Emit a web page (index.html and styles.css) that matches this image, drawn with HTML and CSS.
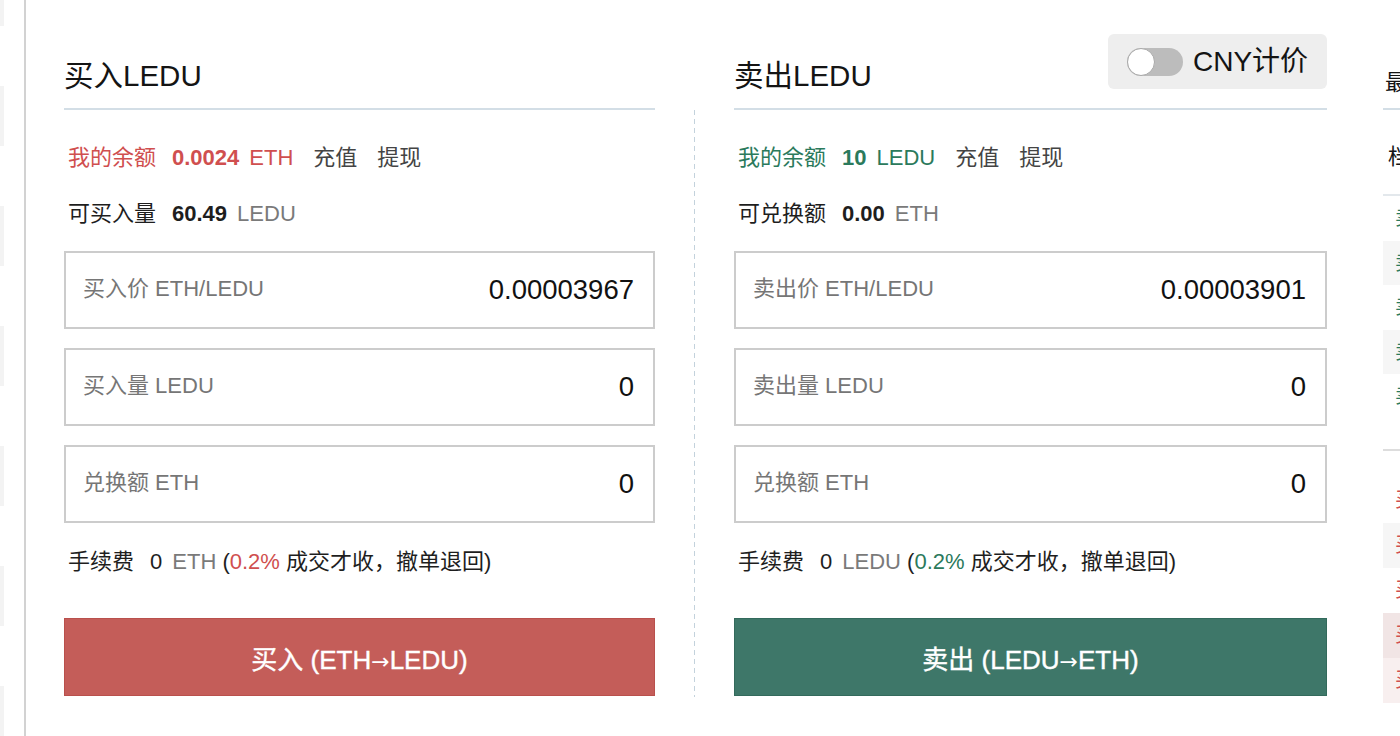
FILE: index.html
```html
<!DOCTYPE html>
<html lang="zh-CN">
<head>
<meta charset="utf-8">
<title>LEDU 交易</title>
<link rel="stylesheet" href="styles.css">
</head>
<body>
<div class="page">
  <aside class="rail">
    <span class="rail-block"></span>
    <span class="rail-block"></span>
    <span class="rail-block"></span>
    <span class="rail-block"></span>
    <span class="rail-block"></span>
    <span class="rail-block"></span>
    <span class="rail-block"></span>
  </aside>
  <main class="main">
    <section class="panel buy">
      <header class="panel-head">
        <h2 class="title">买入LEDU</h2>
      </header>
      <div class="info info-first">
        <span class="lbl red">我的余额</span><b class="num red">0.0024</b><span class="unit red">ETH</span><a class="link">充值</a><a class="link">提现</a>
      </div>
      <div class="info info-second">
        <span class="lbl">可买入量</span><b class="num">60.49</b><span class="unit gray">LEDU</span>
      </div>
      <div class="field"><span class="field-label">买入价 ETH/LEDU</span><span class="field-value">0.00003967</span></div>
      <div class="field"><span class="field-label">买入量 LEDU</span><span class="field-value">0</span></div>
      <div class="field"><span class="field-label">兑换额 ETH</span><span class="field-value">0</span></div>
      <div class="fee"><span class="fee-lbl">手续费</span><span class="fee-num">0</span><span class="gray">ETH</span>&nbsp;(<span class="red">0.2%</span> 成交才收，撤单退回)</div>
      <button class="btn btn-buy">买入 (ETH<span class="arrow">→</span>LEDU)</button>
    </section>

    <div class="vsep"><span class="vsep-line"></span></div>

    <section class="panel sell">
      <header class="panel-head">
        <h2 class="title">卖出LEDU</h2>
        <div class="toggle-box">
          <span class="switch"><span class="knob"></span></span>
          <span class="toggle-text">CNY计价</span>
        </div>
      </header>
      <div class="info info-first">
        <span class="lbl green">我的余额</span><b class="num green">10</b><span class="unit green">LEDU</span><a class="link">充值</a><a class="link">提现</a>
      </div>
      <div class="info info-second">
        <span class="lbl">可兑换额</span><b class="num">0.00</b><span class="unit gray">ETH</span>
      </div>
      <div class="field"><span class="field-label">卖出价 ETH/LEDU</span><span class="field-value">0.00003901</span></div>
      <div class="field"><span class="field-label">卖出量 LEDU</span><span class="field-value">0</span></div>
      <div class="field"><span class="field-label">兑换额 ETH</span><span class="field-value">0</span></div>
      <div class="fee"><span class="fee-lbl">手续费</span><span class="fee-num">0</span><span class="gray">LEDU</span>&nbsp;(<span class="green">0.2%</span> 成交才收，撤单退回)</div>
      <button class="btn btn-sell">卖出 (LEDU<span class="arrow">→</span>ETH)</button>
    </section>

    <section class="book">
      <div class="book-head">最新价格</div>
      <div class="book-sub">档位</div>
      <div class="asks">
        <div class="row ask">卖5 0.00004120</div>
        <div class="row ask">卖4 0.00004080</div>
        <div class="row ask">卖3 0.00004010</div>
        <div class="row ask">卖2 0.00003950</div>
        <div class="row ask">卖1 0.00003901</div>
      </div>
      <div class="mid-gap"></div>
      <div class="bids">
        <div class="row bid">买1 0.00003967</div>
        <div class="row bid">买2 0.00003900</div>
        <div class="row bid">买3 0.00003850</div>
        <div class="row bid">买4 0.00003800</div>
        <div class="row bid">买5 0.00003760</div>
      </div>
    </section>
  </main>
</div>
</body>
</html>
```

FILE: styles.css
```css
html, body {
  margin: 0;
  padding: 0;
  background: #fff;
}

body {
  font-family: "Liberation Sans", "Noto Sans CJK SC", sans-serif;
  color: #1e1e1e;
  overflow: hidden;
}

.page {
  display: flex;
  width: 1400px;
  height: 736px;
  overflow: hidden;
}

/* left rail */
.rail {
  width: 24px;
  flex: none;
  display: flex;
  flex-direction: column;
  gap: 60px;
  margin-top: -34px;
}

.rail-block {
  display: block;
  width: 4px;
  height: 60px;
  flex: none;
  background: #f3f3f3;
}

.main {
  flex: none;
  display: flex;
  align-items: flex-start;
  border-left: 2px solid #d2d2d2;
  padding-left: 38px;
  height: 736px;
  box-sizing: border-box;
}

/* panels */
.panel {
  flex: none;
  display: flex;
  flex-direction: column;
}

.buy { width: 591px; }
.sell { width: 593px; }

.panel-head {
  height: 110px;
  box-sizing: border-box;
  border-bottom: 2px solid #d3dee6;
  display: flex;
  justify-content: space-between;
  align-items: flex-start;
}

.title {
  margin: 56px 0 0;
  font-size: 29.5px;
  font-weight: normal;
  line-height: 40px;
  color: #141414;
}

.toggle-box {
  margin-top: 34px;
  width: 219px;
  height: 55px;
  box-sizing: border-box;
  background: #eeeeee;
  border-radius: 6px;
  display: flex;
  align-items: center;
  padding-left: 19px;
  gap: 10px;
}

.switch {
  display: flex;
  width: 56px;
  height: 28px;
  border-radius: 14px;
  background: #bcbcbc;
  flex: none;
}

.knob {
  display: block;
  width: 28px;
  height: 28px;
  box-sizing: border-box;
  border-radius: 50%;
  background: #fff;
  border: 1px solid #a9a9a9;
}

.toggle-text {
  font-size: 28px;
  line-height: 32px;
  color: #141414;
}

/* info rows */
.info {
  display: flex;
  align-items: baseline;
  padding-left: 4px;
  font-size: 22px;
  line-height: 30px;
  white-space: nowrap;
}

.info-first { margin-top: 33px; }
.info-second { margin-top: 26px; }

.lbl { margin-right: 16px; }
.num { font-weight: bold; margin-right: 10px; }
.unit { margin-right: 20px; }
.link { margin-right: 20px; color: #444; cursor: pointer; }

.red { color: #d04f4f; }
.green { color: #2b7a5c; }
.gray { color: #7a7a7a; }

/* fields */
.field {
  margin-top: 19px;
  height: 78px;
  box-sizing: border-box;
  border: 2px solid #cccccc;
  display: flex;
  justify-content: space-between;
  align-items: center;
  padding: 0 19px 0 17px;
}

.info-second + .field { margin-top: 22px; }

.field-label {
  font-size: 22px;
  line-height: 30px;
  color: #767676;
  margin-bottom: 3px;
}

.field-value {
  font-size: 27.5px;
  line-height: 34px;
  color: #111;
}

/* fee */
.fee {
  margin-top: 24px;
  padding-left: 4px;
  font-size: 22px;
  line-height: 30px;
  white-space: nowrap;
  color: #1e1e1e;
}

.fee-lbl { margin-right: 16px; }
.fee-num { margin-right: 10px; }

/* buttons */
.btn {
  margin-top: 41px;
  height: 78px;
  width: 100%;
  box-sizing: border-box;
  font-family: inherit;
  font-size: 26px;
  color: #fff;
  -webkit-text-stroke: 0.4px #fff;
  cursor: pointer;
  padding: 0;
}

.arrow {
  font-family: "DejaVu Sans", sans-serif;
  font-size: 22px;
  -webkit-text-stroke: 0;
}

.btn-buy {
  background: #c45d59;
  border: 1px solid #b9504c;
}

.btn-sell {
  background: #3e7769;
  border: 1px solid #336a5c;
}

/* dashed separator */
.vsep {
  width: 79px;
  flex: none;
  display: flex;
  justify-content: center;
  padding-top: 110px;
}

.vsep-line {
  display: block;
  width: 1px;
  height: 587px;
  background: repeating-linear-gradient(to bottom, #c3d2dc 0, #c3d2dc 5px, transparent 5px, transparent 9px);
}

/* order book column */
.book {
  flex: none;
  width: 220px;
  margin-left: 56px;
  display: flex;
  flex-direction: column;
}

.book-head {
  height: 110px;
  box-sizing: border-box;
  border-bottom: 2px solid #d3dee6;
  display: flex;
  align-items: flex-end;
  padding: 0 0 10px 2px;
  font-size: 22px;
  line-height: 30px;
  color: #141414;
  white-space: nowrap;
}

.book-sub {
  height: 86px;
  box-sizing: border-box;
  border-bottom: 2px solid #e3e8ec;
  padding: 32px 0 0 5px;
  font-size: 22px;
  line-height: 30px;
  color: #141414;
  white-space: nowrap;
}

.row {
  padding-left: 12px;
  font-size: 20px;
  white-space: nowrap;
}

.ask {
  height: 44.5px;
  line-height: 44.5px;
  color: #2b7a5c;
}

.ask:nth-child(even) { background: #f6f6f6; }

.mid-gap {
  height: 32.5px;
  box-sizing: border-box;
  border-bottom: 2px solid #dddddd;
  margin-bottom: 27px;
}

.bid {
  height: 45px;
  line-height: 45px;
  color: #d04f4f;
}

.bid:nth-child(2) { background: #f6f6f6; }
.bid:nth-child(4) { background: #f1e5e5; }
.bid:nth-child(5) { background: #f8efef; }
```
